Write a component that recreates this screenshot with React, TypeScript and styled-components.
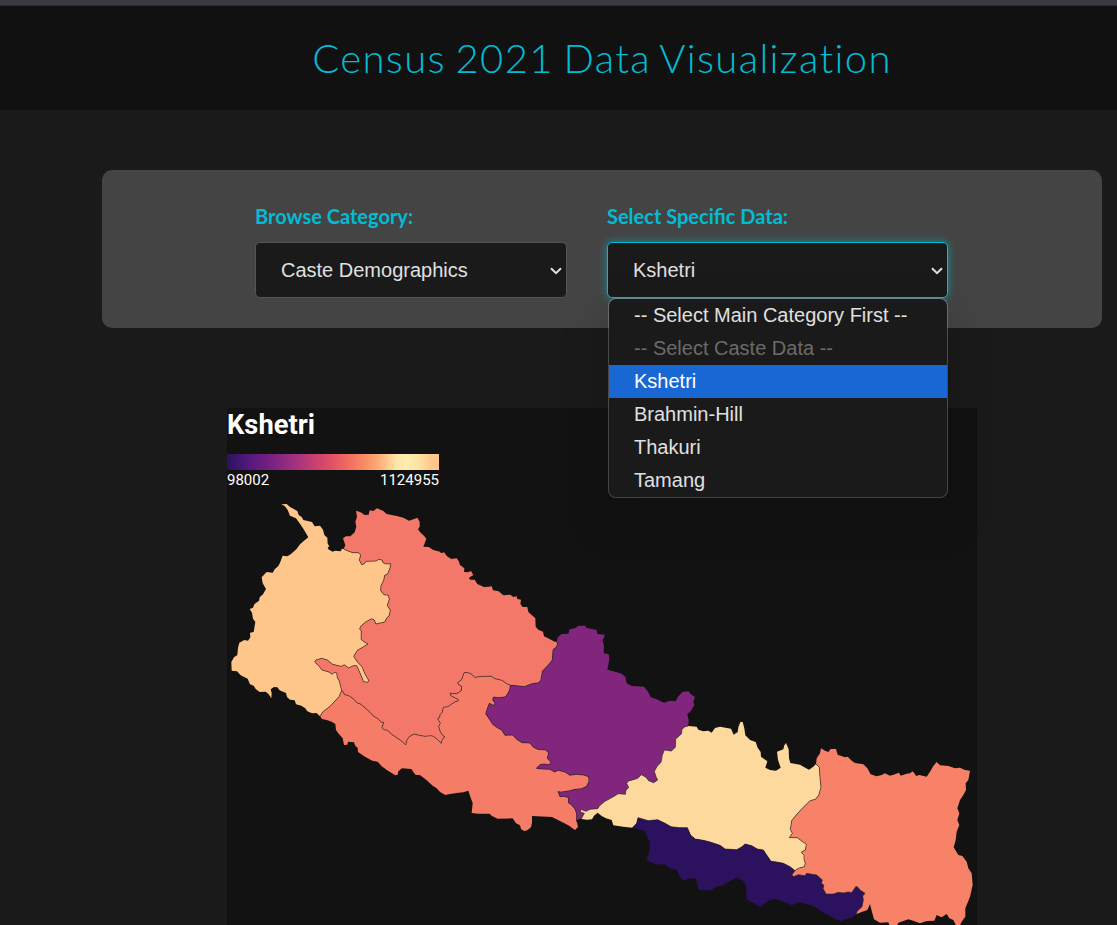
import React from 'react';
import styled, { createGlobalStyle, css } from 'styled-components';

const GlobalStyle = createGlobalStyle`
  * { box-sizing: border-box; }
  html, body { margin: 0; padding: 0; background: #1a1a1a; overflow: hidden; }
`;

const Viewport = styled.div`
  width: 100%;
  height: 925px;
  overflow: hidden;
`;

const Page = styled.div`
  width: 1204px;
  height: 925px;
  overflow: hidden;
  display: flex;
  flex-direction: column;
  background: #1a1a1a;
  color: #e0e0e0;
  font-family: Lato, sans-serif;
`;

const TopStrip = styled.div`
  flex: none;
  height: 6px;
  background: #3b3a3f;
  border-bottom: 1px solid #2b2b2e;
`;

const Header = styled.header`
  flex: none;
  height: 104px;
  display: flex;
  align-items: center;
  justify-content: center;
  background: #111;
`;

const Title = styled.h1`
  margin: 0;
  font-size: 40px;
  line-height: 48px;
  font-weight: 300;
  letter-spacing: 1.35px;
  word-spacing: -2.5px;
  white-space: nowrap;
  color: #00bcd4;
`;

const Filters = styled.section`
  flex: none;
  width: 1000px;
  height: 158px;
  margin: 60px auto 0;
  padding: 31px 0 0 153px;
  display: flex;
  align-items: flex-start;
  gap: 40px;
  border-radius: 10px;
  background: #444;
`;

const Field = styled.div<{ $width: number }>`
  position: relative;
  width: ${(p) => p.$width}px;
  display: flex;
  flex-direction: column;
  gap: 11px;
`;

const Label = styled.label`
  font-size: 20px;
  line-height: 30px;
  font-weight: 700;
  white-space: nowrap;
  color: #00bcd4;
`;

const SelectBox = styled.div<{ $focused?: boolean }>`
  height: 56px;
  padding: 0 4px 0 25px;
  display: flex;
  align-items: center;
  justify-content: space-between;
  border: 1px solid #555;
  border-radius: 5px;
  background: #1a1a1a;
  font: 20px 'Liberation Sans', Arial, sans-serif;
  color: #e0e0e0;
  ${(p) =>
    p.$focused &&
    css`
      border-color: #00bcd4;
      box-shadow: 0 0 8px rgba(0, 188, 212, 0.6);
    `}

  svg {
    margin-top: 1px;
  }
`;

const Menu = styled.ul`
  position: absolute;
  z-index: 2;
  top: 97px;
  left: 1px;
  right: 0;
  margin: 0;
  padding: 0;
  list-style: none;
  overflow: hidden;
  border: 1px solid rgba(255, 255, 255, 0.22);
  border-radius: 8px;
  background: #1a1a1a;
  background-clip: padding-box;
  box-shadow: 0 20px 40px 10px rgba(0, 0, 0, 0.12);
`;

const Option = styled.li<{ $state?: 'selected' | 'disabled' }>`
  height: 33px;
  padding-left: 25px;
  font: 20px/32px 'Liberation Sans', Arial, sans-serif;
  white-space: nowrap;
  color: ${(p) =>
    p.$state === 'selected' ? '#fff' : p.$state === 'disabled' ? '#6b6b6b' : '#e0e0e0'};
  background: ${(p) => (p.$state === 'selected' ? '#1967d2' : 'transparent')};
`;

const Chart = styled.section`
  flex: none;
  width: 750px;
  height: 517px;
  margin: 80px auto 0;
  overflow: hidden;
  background: #121212;
  font-family: Roboto, sans-serif;
  color: #fff;
`;

const ChartTitle = styled.h2`
  margin: 0;
  height: 46px;
  font-size: 27.3px;
  line-height: 34px;
  font-weight: 700;
`;

const Legend = styled.div`
  width: 212px;
`;

const Ramp = styled.div`
  height: 16px;
  background: linear-gradient(
    90deg,
    #2c115f 0%, #51197c 10%, #721f81 19%, #932b80 28%, #b73779 37%, #e24f65 49%,
    #f1705f 58%, #fb8f67 66%, #fea973 71%, #fde5a7 80%, #fcecae 85%, #fde0a1 91%, #fec98d 96%, #fec488 100%
  );
`;

const Range = styled.div`
  height: 19px;
  display: flex;
  justify-content: space-between;
  font-size: 15px;
  line-height: 20px;
`;

const MapCanvas = styled.svg`
  display: block;
  width: 750px;
  height: 436px;
`;

type Point = [number, number];

/* Survey lines are stored at three units per map pixel, from the corner of their sheet. */
const line = (x: number, y: number, data: string): Point[] =>
  data
    .trim()
    .split(/\s+/)
    .map((pair) => {
      const [px, py] = pair.split(',').map(Number);
      return [x + px / 3, y + py / 3];
    });

const back = (points: Point[]): Point[] => [...points].reverse();

const westRim = line(220, 495, `371,162 366,161 362,169 345,167 338,170 325,163 323,158 328,154 323,146 322,128
  313,120 309,104 300,92 284,94 276,81 250,75 245,66 236,60 232,48 209,35 200,27 184,28 195,34 203,45 210,62
  228,70 241,88 251,103 265,127 252,137 240,148 229,163 212,178 202,184 188,182 180,203 175,213 164,223 158,233
  140,231 125,247 128,265 138,282 129,298 119,307 117,317 103,328 99,338 89,342 96,353 99,371 106,381 101,411
  90,413 91,427 84,437 73,435 58,443 54,458 52,480 42,487 34,501 35,527 51,529 62,541 83,551 90,568 101,572
  107,582 119,591 137,590 146,598 154,610 155,594 152,583 162,576 172,577 179,586 198,594 201,606 210,614
  224,616 228,628 244,632 256,640 262,649 276,655 290,654 300,664`);

const westKarnali = line(220, 495, `371,162 384,168 398,173 415,173 422,180 418,195 425,209 433,206 438,199 470,198
  475,193 486,195 489,203 500,207 511,206 511,216 503,237 494,241 491,256 483,272 482,287 492,299 505,301 508,313
  502,331 511,346 507,363 500,369 494,381 468,387 463,375 455,371 437,381 422,394 419,402 424,408 423,433 433,441
  444,447 428,457 412,466 401,484 410,498 427,517 434,535 446,556 443,562 431,560 423,541 414,520 410,512 400,512
  386,519 373,509 364,514 338,508 322,495 305,490 288,495 284,501 297,513 306,525 327,531 336,538 344,532 350,534
  352,548 358,558 365,587`);

const westLumbini = line(220, 495, `365,587 357,605 330,634 308,651 300,664`);

const karnaliRim = line(340, 495, `11,162 16,150 9,130 18,124 31,124 44,112 49,95 46,80 51,66 48,47 62,52 74,60
  86,59 89,46 100,48 111,40 130,48 140,57 170,63 190,68 207,77 220,73 232,68 239,80 239,95 234,103 242,113
  252,122 259,131 254,145 250,155 266,156 280,165 300,170 303,175 312,172 321,184 334,192 350,190 356,198
  360,210 373,220 372,231 384,232 393,228 400,240 387,248 390,254 404,254 412,267 432,276 446,275 455,274
  459,286 476,289 490,301 511,299 520,306 530,304 532,312 543,314 541,327 548,336 562,336 565,351 575,360
  586,370 587,395 595,404 609,410 612,424 630,433 644,440 650,440`);

const karnaliGandaki = line(470, 610, `260,95 263,103 258,112 249,119 247,150 235,165 217,184 215,198 212,212
  205,218 183,222 163,230 148,228 121,226`);

const karnaliLumbini = line(310, 640, `601,136 590,131 576,121 555,116 545,109 520,109 500,111 496,113 485,103
  477,99 463,97 459,107 455,119 443,128 446,134 455,139 454,152 440,161 420,160 422,166 430,171 443,177 446,182
  436,185 422,194 414,200 400,202 397,217 390,224 389,233 383,235 391,250 386,258 391,276 400,288 404,290
  396,301 394,310 383,299 370,289 362,287 345,289 328,286 312,282 298,290 291,299 287,315 275,303 260,293
  245,283 233,271 222,269 216,263 221,247 214,247 204,236 190,228 180,217 165,203 150,191 140,188 132,178
  118,168 103,163 100,156 95,152`);

const lumbiniRim = line(310, 640, `30,229 36,237 50,240 65,245 76,252 78,270 86,281 98,295 102,315 112,314 114,305
  132,307 136,318 143,323 144,336 165,350 187,362 203,365 215,379 235,393 256,406 263,404 265,394 276,385
  304,387 316,404 331,406 350,421 368,437 380,445 390,456 406,465 420,462 440,459 460,457 475,452 482,473
  488,489 485,519 505,521 539,521 546,528 563,536 608,535 618,550 630,556 633,567 642,573 652,571 663,562
  666,548 666,528 726,531 750,543 775,556 795,570 804,561 802,551 798,541 800,540`);

const gandakiLumbini = line(470, 610, `121,226 119,240 112,253 105,261 86,263 70,261 68,270 75,279 73,287 58,280
  54,290 47,311 60,330 68,343 82,353 95,360 105,376 128,375 140,388 156,398 180,399 190,412 203,418 227,420
  236,428 232,445 243,457 237,464 222,462 210,464 199,475 215,477 240,478 253,486 265,481 285,486 300,496
  318,493 340,495 356,500 357,514 350,529 335,536 315,538 300,542 275,546 264,545 270,560 282,559 296,563
  295,578 305,585 315,597 320,612 320,630`);

const gandakiRim = line(470, 610, `260,95 263,82 275,72 295,71 299,58 315,55 325,47 345,47 350,54 370,58 380,60
  382,72 404,74 402,84 397,90 402,107 401,130 416,133 418,148 412,179 430,184 455,191 466,201 470,220 485,228
  522,230 533,244 542,262 560,268 582,278 600,272 617,274 623,262 637,246 655,244 662,252 675,261 670,275
  673,285 663,302 652,313 656,330 655,348`);

const gandakiBagmati = line(470, 610, `655,348 645,350 636,358 634,372 617,387 616,412 604,423 583,420 577,435
  573,457 562,468 553,484 558,500 563,510 551,518 536,512 528,502 514,494 503,505 487,510 475,513 470,520
  476,533 468,540 466,553 445,551 430,560 405,574 390,586 383,596 360,598 348,604 332,598 331,606 343,610
  335,625`);

const bagmatiRim = line(570, 700, `355,78 380,80 385,89 400,94 415,92 425,98 435,84 450,80 483,86 491,104 503,96
  505,82 511,66 518,66 523,85 526,106 540,120 557,126 563,143 572,156 573,170 592,184 586,203 600,210 618,212
  632,203 624,180 621,155 640,148 643,136 648,129 656,148 657,175 661,189 690,194 707,204 717,209 730,200
  738,192`);

const bagmatiKoshi = line(570, 700, `738,192 748,202 750,235 753,262 746,286 736,298 720,302 700,322 681,342
  665,362 661,388 667,400 658,413 682,413 695,423 709,433 706,450 694,456 702,466 702,478 706,490 703,500
  685,505 675,512`);

const bagmatiMadhesh = line(570, 700, `675,512 660,500 640,490 620,486 603,484 590,465 580,450 562,447 545,437
  525,432 515,441 500,449 465,447 450,436 420,426 400,421 376,417 362,406 352,383 328,383 303,380 285,370
  263,359 235,362 204,353 200,370 187,383`);

const bagmatiBase = line(570, 700, `187,383 160,380 130,376 125,360 108,355 95,348 83,338 72,347 66,358 50,359
  35,357`);

const madheshRim = line(570, 700, `187,383 222,392 231,408 240,428 238,455 229,480 255,492 270,494 282,491 300,505
  320,510 330,530 340,542 360,535 378,536 382,552 386,569 420,572 440,560 460,556 480,543 500,533 520,543
  528,555 530,597 540,604 555,612 570,622 585,610 600,600 618,597 640,605 665,616 690,607 730,618 760,638
  780,648 795,657 812,664 825,658 845,653 858,643`);

const koshiMadhesh = line(780, 730, `228,553 232,543 246,530 250,510 248,498 255,490 240,480 235,473 228,469
  222,478 215,488 205,486 190,489 175,487 160,492 138,492 129,475 132,466 124,460 127,450 110,435 92,432
  80,430 75,437 55,434 40,440 36,434 45,422`);

const koshiRim = line(780, 730, `108,102 110,85 120,70 123,55 135,62 145,66 152,57 168,57 173,74 195,82 203,80
  215,92 225,99 250,103 262,115 272,133 290,139 305,135 315,130 330,137 345,133 357,128 362,137 380,131
  391,130 397,124 402,128 408,138 418,135 440,140 450,125 460,108 470,96 480,106 505,108 525,115 540,113
  555,120 570,122 565,150 557,160 558,180 550,195 540,210 532,235 538,250 532,270 538,285 530,305 527,330
  521,352 535,375 547,378 560,395 565,415 575,430 578,465 570,500 556,535 556,560 545,575 538,590 530,590
  520,570 508,565 500,552 485,562 470,555 463,572 440,573 420,580 400,572 385,568 355,578 350,590 330,590
  325,577 300,578 282,568 277,550 270,522 262,540 245,546 228,553`);

const provinces: { name: string; fill: string; rings: Point[][] }[] = [
  { name: 'Sudurpashchim', fill: '#fec68a', rings: [westRim, back(westLumbini), back(westKarnali)] },
  { name: 'Karnali', fill: '#f37869', rings: [karnaliRim, karnaliGandaki, karnaliLumbini, back(westKarnali)] },
  { name: 'Lumbini', fill: '#f57c67', rings: [westLumbini, lumbiniRim, back(gandakiLumbini), karnaliLumbini] },
  { name: 'Gandaki', fill: '#82257c', rings: [gandakiRim, gandakiBagmati, back(gandakiLumbini), back(karnaliGandaki)] },
  { name: 'Bagmati', fill: '#fed99d', rings: [bagmatiRim, bagmatiKoshi, bagmatiMadhesh, bagmatiBase, back(gandakiBagmati)] },
  { name: 'Madhesh', fill: '#2c115f', rings: [madheshRim, koshiMadhesh, bagmatiMadhesh] },
  { name: 'Koshi', fill: '#f88267', rings: [koshiRim, koshiMadhesh, back(bagmatiKoshi)] },
];

const borders = [
  westKarnali, westLumbini, karnaliGandaki, karnaliLumbini, gandakiLumbini,
  gandakiBagmati, bagmatiKoshi, bagmatiMadhesh, koshiMadhesh,
  line(780, 730, '18,426 28,432 40,440'),
];

const toPath = (points: Point[]) =>
  'M' + points.map(([x, y]) => `${x.toFixed(2)},${y.toFixed(2)}`).join('L');

const ProvinceMap = () => (
  <MapCanvas viewBox="227 489 750 436" aria-label="Provinces of Nepal">
    {provinces.map((p) => (
      <path key={p.name} d={toPath(p.rings.flat()) + 'Z'} fill={p.fill} />
    ))}
    {borders.map((b, i) => (
      <path key={i} d={toPath(b)} fill="none" stroke="#222" strokeOpacity={0.6} strokeWidth={1} strokeLinejoin="round" />
    ))}
  </MapCanvas>
);

const Chevron = () => (
  <svg width="12" height="8" viewBox="0 0 12 8" fill="none" stroke="#e0e0e0" strokeWidth="2">
    <path d="M1 1.2 6 6.2 11 1.2" />
  </svg>
);

const options: { text: string; state?: 'selected' | 'disabled' }[] = [
  { text: '-- Select Main Category First --' },
  { text: '-- Select Caste Data --', state: 'disabled' },
  { text: 'Kshetri', state: 'selected' },
  { text: 'Brahmin-Hill' },
  { text: 'Thakuri' },
  { text: 'Tamang' },
];

export default function App() {
  return (
    <Viewport>
      <GlobalStyle />
      <Page>
        <TopStrip />
        <Header>
          <Title>Census 2021 Data Visualization</Title>
        </Header>
        <Filters>
          <Field $width={312}>
            <Label>Browse Category:</Label>
            <SelectBox>
              Caste Demographics
              <Chevron />
            </SelectBox>
          </Field>
          <Field $width={341}>
            <Label>Select Specific Data:</Label>
            <SelectBox $focused>
              Kshetri
              <Chevron />
            </SelectBox>
            <Menu>
              {options.map((o) => (
                <Option key={o.text} $state={o.state}>
                  {o.text}
                </Option>
              ))}
            </Menu>
          </Field>
        </Filters>
        <Chart>
          <ChartTitle>Kshetri</ChartTitle>
          <Legend>
            <Ramp />
            <Range>
              <span>98002</span>
              <span>1124955</span>
            </Range>
          </Legend>
          <ProvinceMap />
        </Chart>
      </Page>
    </Viewport>
  );
}
